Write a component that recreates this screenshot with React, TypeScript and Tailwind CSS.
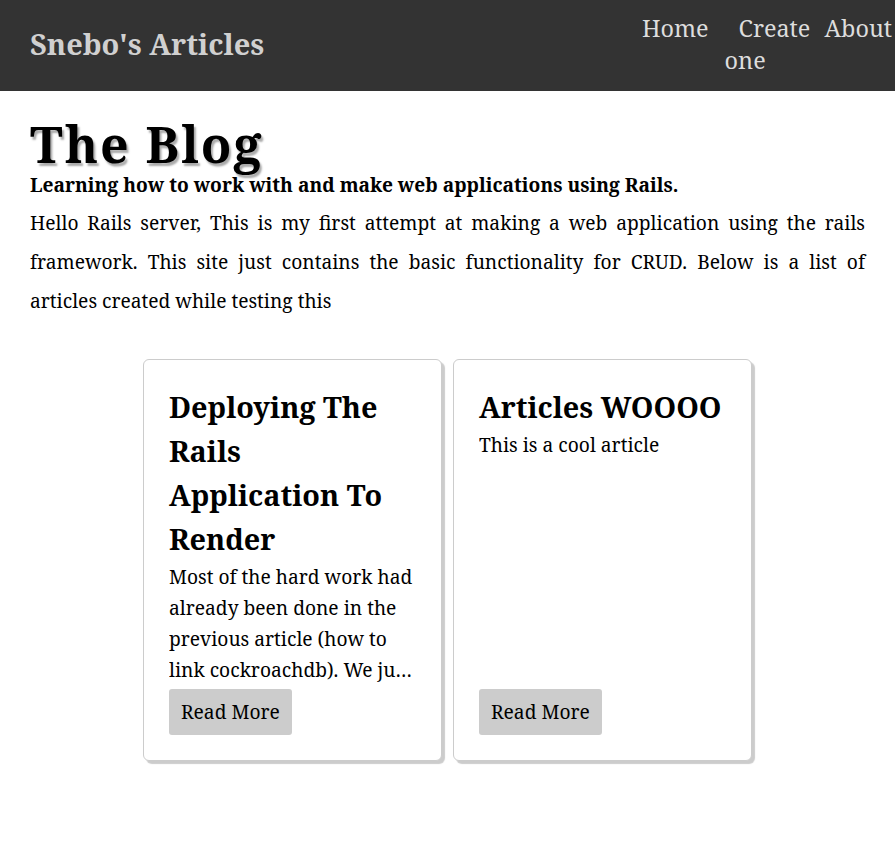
const serif = "font-['Noto_Serif','DejaVu_Serif','Liberation_Serif',serif]";

const articles = [
  {
    title: "Deploying The Rails Application To Render",
    body: "Most of the hard work had already been done in the previous article (how to link cockroachdb). We just had to make a few changes to get it running on Render.",
  },
  {
    title: "Articles WOOOO",
    body: "This is a cool article",
  },
];

function ArticleCard({ title, body }: { title: string; body: string }) {
  return (
    <div className="flex w-[299px] flex-col justify-between rounded-md border border-[#ccc] bg-white p-[25px] shadow-[3px_3px_1px_#ccc]">
      <div>
        <h2 className="text-[28.8px] font-bold leading-[44px] text-black">{title}</h2>
        <p className="line-clamp-4 text-[19.2px] leading-[31px] text-black">{body}</p>
      </div>
      <a className="mt-[4px] self-start rounded-[3px] bg-[#ccc] px-[12px] py-[7px] text-[19.2px] leading-[32px] text-black">
        Read More
      </a>
    </div>
  );
}

export default function App() {
  return (
    <div className={`min-h-[864px] bg-white ${serif}`}>
      <header className="flex h-[91px] items-start justify-between bg-[#333] pl-[30px] pr-[3px]">
        <h1 className="mt-[26px] text-[29px] font-bold leading-[36px] text-[#d0d0d0]">
          Snebo's Articles
        </h1>
        <nav className="mt-[12px] flex gap-[16px] text-[23.4px] leading-[32px] text-[#ddd]">
          <a>Home</a>
          <a className="w-[84px] indent-[14px]">Create one</a>
          <a>About</a>
        </nav>
      </header>

      <main className="px-[30px]">
        <h1 className="mt-[24px] text-[50px] font-bold leading-[58px] tracking-[2px] text-black [text-shadow:2px_3px_2px_#aaa]">
          The Blog
        </h1>
        <p className="text-[19.2px] font-bold leading-[24px] text-black">
          Learning how to work with and make web applications using Rails.
        </p>
        <p className="mt-[6px] text-justify text-[19.2px] leading-[39px] text-black">
          Hello Rails server, This is my first attempt at making a web application using the rails
          framework. This site just contains the basic functionality for CRUD. Below is a list of
          articles created while testing this
        </p>

        <div className="mt-[39px] flex justify-center gap-[11px]">
          {articles.map((a) => (
            <ArticleCard key={a.title} title={a.title} body={a.body} />
          ))}
        </div>
      </main>
    </div>
  );
}
